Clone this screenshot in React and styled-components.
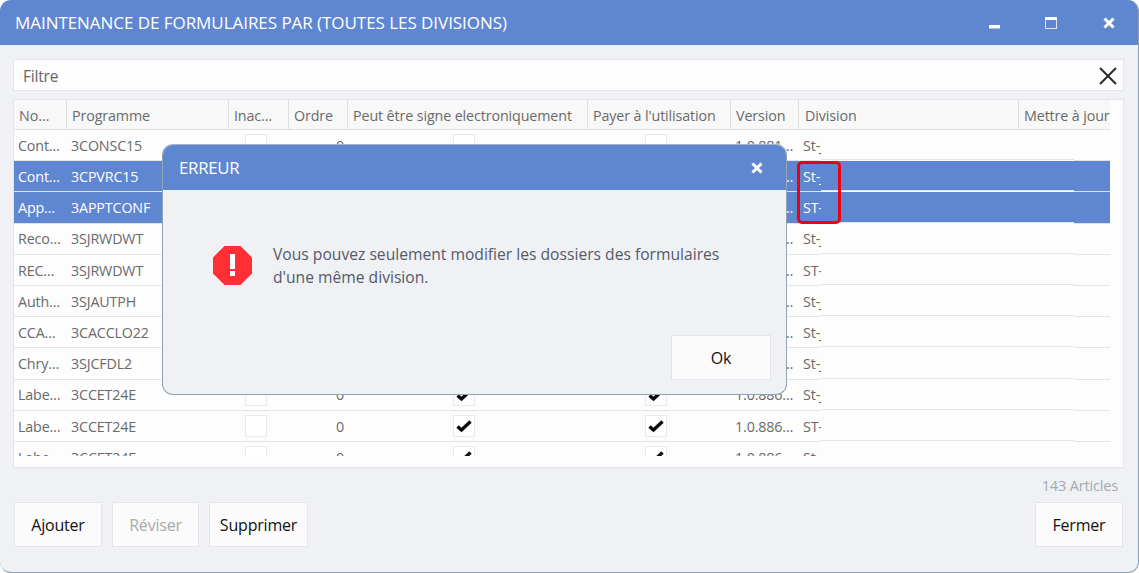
import React from 'react';
import styled, { createGlobalStyle } from 'styled-components';

const Global = createGlobalStyle`
  html, body { margin: 0; padding: 0; background: #fff; }
  body { font-family: "Open Sans", "Noto Sans", "Liberation Sans", sans-serif; }
  * { box-sizing: border-box; }
`;

const COLS = '53px 162px 60px 59px 240px 143px 68px 220px 91px';
const BLUE = '#5f86d0';
const PANEL = '#eff1f5';

const Window = styled.div`
  position: relative;
  width: 1139px;
  height: 573px;
  display: flex;
  flex-direction: column;
  background: ${PANEL};
  border-radius: 11px;
  border-right: 1px solid #8fa3b5;
  border-bottom: 1px solid #8fa3b5;
  overflow: hidden;
`;
const TitleBar = styled.header`
  flex: 0 0 45px;
  display: flex;
  align-items: center;
  justify-content: space-between;
  padding: 0 23px 0 15px;
  background: ${BLUE};
  color: #fff;
`;
const Title = styled.h1`
  margin: 0;
  font-size: 17px;
  font-weight: 400;
  letter-spacing: -0.05px;
  white-space: nowrap;
`;
const Controls = styled.div`
  display: flex;
  align-items: center;
  gap: 46px;
`;
const Body = styled.main`
  flex: 1;
  display: flex;
  flex-direction: column;
  padding: 14px 15px 25px 13px;
`;
const FilterBox = styled.div`
  height: 32px;
  width: 1111px;
  display: flex;
  align-items: center;
  justify-content: space-between;
  padding: 1px 6px 0 9px;
  background: #fdfdfd;
  border: 1px solid #e3e5e9;
  color: #666;
  font-size: 15.5px;
  letter-spacing: -0.2px;
`;
const Table = styled.section`
  margin-top: 8px;
  width: 1111px;
  height: 369px;
  background: #fdfdfd;
  border: 1px solid #e3e5e9;
`;
const HeadRow = styled.div`
  display: grid;
  grid-template-columns: ${COLS};
  width: 1096px;
  height: 30px;
  background: #f8f8f8;
  border-bottom: 1px solid #dedede;
`;
const HeadCell = styled.div`
  display: flex;
  align-items: center;
  padding: 1px 0 0 ${p => p.$pad || 5}px;
  border-right: 1px solid #dedede;
  color: #6a6a6a;
  font-size: 14.3px;
  letter-spacing: -0.12px;
  white-space: nowrap;
  overflow: hidden;
  &:last-child { border-right: none; }
`;
const Rows = styled.div`
  width: 1096px;
  height: 325.5px;
  overflow: hidden;
`;
const Row = styled.div`
  position: relative;
  display: grid;
  grid-template-columns: ${COLS};
  height: 31.2px;
  align-items: center;
  background: ${p => (p.$selected ? BLUE : 'transparent')};
  color: ${p => (p.$selected ? '#fff' : '#6a6a6a')};
  border-bottom: 1px solid ${p => (p.$selected ? '#dfe3ee' : '#e4e4e4')};
  font-size: 14.3px;
  letter-spacing: -0.15px;
  white-space: nowrap;
  &::after {
    content: '';
    position: absolute;
    left: 807px;
    width: 253px;
    bottom: -1px;
    height: 2px;
    background: linear-gradient(${p => (p.$selected ? '#dfe3ee' : '#e4e4e4')} 50%, #fdfdfd 50%);
  }
`;
const Cell = styled.div`
  padding: 0.6px 0 0 4px;
  overflow: hidden;
  min-width: 0;
`;
const NumberCell = styled(Cell)`
  text-align: right;
  padding-right: 4px;
`;
const BoxCell = styled(Cell)`
  display: flex;
  justify-content: center;
  padding: 0 ${p => p.$shift}px 0 0;
`;
const DivisionText = styled.div`
  width: 18px;
  overflow: hidden;
`;
const Box = styled.span`
  display: flex;
  align-items: center;
  justify-content: center;
  width: 22px;
  height: 22px;
  background: #fff;
  border: 1px solid #e8e8e8;
`;
const Highlight = styled.div`
  position: absolute;
  left: 797px;
  top: 161px;
  width: 44px;
  height: 63px;
  border: 3px solid #ee0010;
  border-radius: 5px;
  pointer-events: none;
`;
const Count = styled.div`
  margin-top: 9px;
  padding-right: 5px;
  height: 17px;
  line-height: 17px;
  text-align: right;
  color: #a6a9b1;
  font-size: 14.6px;
  letter-spacing: -0.2px;
`;
const Footer = styled.footer`
  margin-top: 8px;
  display: flex;
  gap: 10px;
  padding-left: 1px;
`;
const Button = styled.button`
  width: ${p => p.$w}px;
  height: 45px;
  margin-left: ${p => (p.$push ? 'auto' : '0')};
  padding: 0;
  background: #fbfbfc;
  border: 1px solid #e3e5e9;
  color: ${p => (p.disabled ? '#a9a9a9' : '#111')};
  font-family: inherit;
  font-size: 16px;
  letter-spacing: -0.2px;
`;
const Modal = styled.div`
  position: absolute;
  left: 162px;
  top: 144px;
  width: 625px;
  height: 251px;
  display: flex;
  flex-direction: column;
  background: ${PANEL};
  border: 1px solid #93a5b5;
  border-top-color: #a5b3c4;
  border-radius: 11px;
  overflow: hidden;
`;
const ModalHead = styled.div`
  flex: 0 0 45px;
  display: flex;
  align-items: center;
  justify-content: space-between;
  padding: 0 23px 0 16px;
  background: ${BLUE};
  color: #fff;
  font-size: 16.8px;
  letter-spacing: -0.25px;
`;
const ModalBody = styled.div`
  flex: 1;
  display: flex;
  align-items: flex-start;
  gap: 21px;
  padding: 56px 40px 0 50px;
`;
const Message = styled.p`
  margin: -3px 0 0;
  color: #555a66;
  font-size: 15.65px;
  line-height: 23px;
`;
const ModalFoot = styled.div`
  display: flex;
  justify-content: flex-end;
  padding: 0 15px 14px 0;
`;
const MinIcon = styled.svg`
  display: block;
  margin-right: -1px;
`;

const Check = () => (
  <svg width="18" height="14" viewBox="0 0 18 14">
    <path d="M2.5 7.5 L6.5 11 L15.5 2.5" fill="none" stroke="#0a0a0a" strokeWidth="3.4" />
  </svg>
);
const Minimize = () => (
  <MinIcon width="11" height="12" viewBox="0 0 11 12">
    <rect x="0" y="8" width="11" height="3.5" fill="#fff" />
  </MinIcon>
);
const Maximize = () => (
  <svg width="12" height="12" viewBox="0 0 12 12" style={{ display: 'block' }}>
    <rect x="0.5" y="0.5" width="11" height="11" fill="none" stroke="#dfe6f5" />
    <rect x="0" y="0" width="12" height="3" fill="#fff" />
  </svg>
);
const Close = () => (
  <svg width="12" height="12" viewBox="0 0 12 12" style={{ display: 'block' }}>
    <path d="M1.5 1.5 L10.5 10.5 M10.5 1.5 L1.5 10.5" stroke="#fff" strokeWidth="3" />
  </svg>
);
const ClearX = () => (
  <svg width="18" height="18" viewBox="0 0 18 18" style={{ display: 'block' }}>
    <path d="M1 1 L17 17 M17 1 L1 17" stroke="#2a2a2a" strokeWidth="2" />
  </svg>
);
const Stop = () => (
  <svg width="39" height="39" viewBox="0 0 39 39" style={{ flex: 'none', display: 'block' }}>
    <polygon points="11.5,0 27.5,0 39,11.5 39,27.5 27.5,39 11.5,39 0,27.5 0,11.5" fill="#ff2f35" />
    <rect x="17" y="8" width="5" height="15" fill="#fff" />
    <rect x="17" y="25" width="5" height="5" fill="#fff" />
  </svg>
);

const heads = [
  ['No…'], ['Programme'], ['Inac…'], ['Ordre'], ['Peut être signe electroniquement'],
  ["Payer à l'utilisation"], ['Version'], ['Division', 6], ['Mettre à jour'],
];
const rows = [
  ['Cont…', '3CONSC15', '1.0.881…', 'St-Jean', false, false],
  ['Cont…', '3CPVRC15', '1.0.881…', 'St-Jean', false, true],
  ['App…', '3APPTCONF', '1.0.881…', 'ST-JEAN', false, true],
  ['Reco…', '3SJRWDWT', '1.0.886…', 'St-Jean', true, false],
  ['REC…', '3SJRWDWT', '1.0.886…', 'ST-JEAN', true, false],
  ['Auth…', '3SJAUTPH', '1.0.886…', 'St-Jean', true, false],
  ['CCA…', '3CACCLO22', '1.0.886…', 'St-Jean', true, false],
  ['Chry…', '3SJCFDL2', '1.0.886…', 'St-Jean', true, false],
  ['Labe…', '3CCET24E', '1.0.886…', 'St-Jean', true, false],
  ['Labe…', '3CCET24E', '1.0.886…', 'ST-JEAN', true, false],
  ['Labe…', '3CCET24E', '1.0.886…', 'St-Jean', true, false],
];

export default function App() {
  return (
    <>
      <Global />
      <Window>
        <TitleBar>
          <Title>MAINTENANCE DE FORMULAIRES PAR (TOUTES LES DIVISIONS)</Title>
          <Controls>
            <Minimize />
            <Maximize />
            <Close />
          </Controls>
        </TitleBar>
        <Body>
          <FilterBox>
            Filtre
            <ClearX />
          </FilterBox>
          <Table>
            <HeadRow>
              {heads.map(([h, pad]) => (
                <HeadCell key={h} $pad={pad}>{h}</HeadCell>
              ))}
            </HeadRow>
            <Rows>
              {rows.map(([name, prog, version, division, checked, selected], i) => (
                <Row key={i} $selected={selected}>
                  <Cell>{name}</Cell>
                  <Cell>{prog}</Cell>
                  <BoxCell $shift={6}><Box /></BoxCell>
                  <NumberCell>0</NumberCell>
                  <BoxCell $shift={8}><Box>{checked && <Check />}</Box></BoxCell>
                  <BoxCell $shift={8}><Box>{checked && <Check />}</Box></BoxCell>
                  <Cell>{version}</Cell>
                  <Cell><DivisionText>{division}</DivisionText></Cell>
                  <Cell />
                </Row>
              ))}
            </Rows>
          </Table>
          <Count>143 Articles</Count>
          <Footer>
            <Button $w={88}>Ajouter</Button>
            <Button $w={87} disabled>Réviser</Button>
            <Button $w={99}>Supprimer</Button>
            <Button $w={88} $push>Fermer</Button>
          </Footer>
        </Body>
        <Highlight />
        <Modal>
          <ModalHead>
            ERREUR
            <Close />
          </ModalHead>
          <ModalBody>
            <Stop />
            <Message>
              Vous pouvez seulement modifier les dossiers des formulaires
              <br />
              d'une même division.
            </Message>
          </ModalBody>
          <ModalFoot>
            <Button $w={100}>Ok</Button>
          </ModalFoot>
        </Modal>
      </Window>
    </>
  );
}
